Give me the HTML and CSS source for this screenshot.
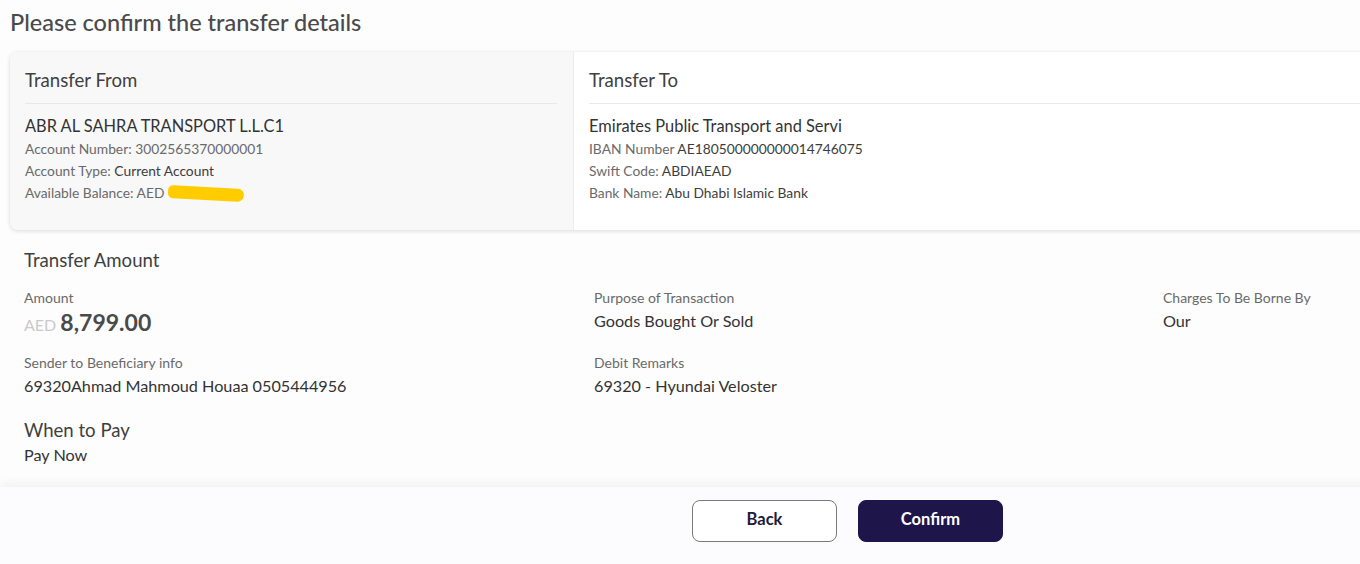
FILE: index.html
```html
<!DOCTYPE html>
<html>
<head>
<meta charset="utf-8">
<link rel="stylesheet" href="styles.css">
</head>
<body>
<div class="page">
  <main class="main">
    <h1 class="title">Please confirm the transfer details</h1>
    <section class="card">
      <div class="party from">
        <h2 class="party-head">Transfer From</h2>
        <div class="party-body">
          <div class="party-name">ABR AL SAHRA TRANSPORT L.L.C1</div>
          <div class="line"><span class="k">Account Number: </span><span class="k">3002565370000001</span></div>
          <div class="line"><span class="k">Account Type: </span><span class="v">Current Account</span></div>
          <div class="line"><span class="k">Available Balance: AED</span><span class="redact"></span></div>
        </div>
      </div>
      <div class="party to">
        <h2 class="party-head">Transfer To</h2>
        <div class="party-body">
          <div class="party-name">Emirates Public Transport and Servi</div>
          <div class="line"><span class="k">IBAN Number </span><span class="v">AE180500000000014746075</span></div>
          <div class="line"><span class="k">Swift Code: </span><span class="v">ABDIAEAD</span></div>
          <div class="line"><span class="k">Bank Name: </span><span class="v">Abu Dhabi Islamic Bank</span></div>
        </div>
      </div>
    </section>

    <section class="amount">
      <h2 class="sec-head">Transfer Amount</h2>
      <div class="grid">
        <div class="cell">
          <div class="label">Amount</div>
          <div class="money"><span class="cur">AED</span> <span class="num">8,799.00</span></div>
        </div>
        <div class="cell">
          <div class="label">Purpose of Transaction</div>
          <div class="value">Goods Bought Or Sold</div>
        </div>
        <div class="cell">
          <div class="label">Charges To Be Borne By</div>
          <div class="value">Our</div>
        </div>
        <div class="cell">
          <div class="label">Sender to Beneficiary info</div>
          <div class="value">69320Ahmad Mahmoud Houaa 0505444956</div>
        </div>
        <div class="cell">
          <div class="label">Debit Remarks</div>
          <div class="value">69320 - Hyundai Veloster</div>
        </div>
      </div>
      <h2 class="sec-head when">When to Pay</h2>
      <div class="value">Pay Now</div>
    </section>
  </main>
  <footer class="footer">
    <button class="btn back">Back</button>
    <button class="btn confirm">Confirm</button>
  </footer>
</div>
</body>
</html>
```

FILE: styles.css
```css
* { box-sizing: border-box; }
html, body { margin: 0; padding: 0; overflow: hidden; }
body {
  font-family: Lato, "Open Sans", "Liberation Sans", sans-serif;
  color: #3f3f3f;
  background: #fdfdfd;
}
.page { width: 1695px; height: 564px; display: flex; flex-direction: column; }
.main { padding: 0 0 0 10px; flex: 0 0 487px; background: #fdfdfd; }
.title {
  margin: 0;
  padding-top: 8px;
  height: 52px;
  font-size: 23.5px;
  font-weight: 500;
  line-height: 28px;
  color: #4a4a4a;
}
.card {
  display: flex;
  height: 178px;
  border-radius: 8px 0 0 8px;
  box-shadow: 0 1px 4px rgba(0,0,0,0.14);
  overflow: hidden;
}
.party { padding: 16px 16px 0 15px; }
.from { width: 564px; background: #f8f8f8; border-right: 1px solid #ececec; }
.to { flex: 1; background: #fff; }
.party-head {
  margin: 0;
  font-size: 18.6px;
  font-weight: 400;
  color: #404040;
  height: 36px;
  line-height: 24px;
  border-bottom: 1px solid #e8e8e8;
}
.party-body { padding-top: 12px; }
.party-name { font-size: 16.4px; color: #333; line-height: 20px; margin-bottom: 2px; }
.line { font-size: 13.8px; line-height: 22px; color: #666; position: relative; }
.k { color: #6a6a6a; }
.v { color: #3d3d3d; }
.redact {
  display: inline-block;
  width: 76px;
  height: 13px;
  margin-left: 4px;
  vertical-align: -2px;
  background: #ffcc00;
  border-radius: 7px 9px 9px 7px;
  transform: rotate(3deg);
}
.amount { padding: 18px 0 0 14px; }
.sec-head { margin: 0; font-size: 18.6px; font-weight: 400; color: #404040; line-height: 24px; }
.grid {
  display: grid;
  grid-template-columns: 570px 569px 400px;
  row-gap: 15px;
  margin-top: 17px;
}
.label { font-size: 14px; color: #6a6a6a; line-height: 18px; }
.value { font-size: 16.2px; color: #333; line-height: 22px; margin-top: 3px; }
.money { line-height: 28px; margin-top: 1px; }
.cur { font-size: 16px; color: #cacaca; }
.num { font-size: 23px; font-weight: 700; color: #4a4a4a; }
.when { margin-top: 21px; }
.amount > .value { margin-top: 2px; }
.footer {
  flex: 1;
  background: #fcfcfe;
  box-shadow: 0 -4px 10px rgba(0,0,0,0.05);
  display: flex;
  align-items: flex-start;
  justify-content: center;
  gap: 21px;
  padding-top: 13px;
  position: relative;
}
.btn {
  width: 145px;
  height: 42px;
  border-radius: 8px;
  font-family: Lato, "Liberation Sans", sans-serif;
  font-size: 16.5px;
  font-weight: 700;
  padding: 0 0 5px;
  cursor: pointer;
}
.back { background: #fff; border: 1px solid #7a7a7a; color: #1e1a3a; }
.confirm { background: #1e164a; border: 1px solid #1e164a; color: #fff; }
```
